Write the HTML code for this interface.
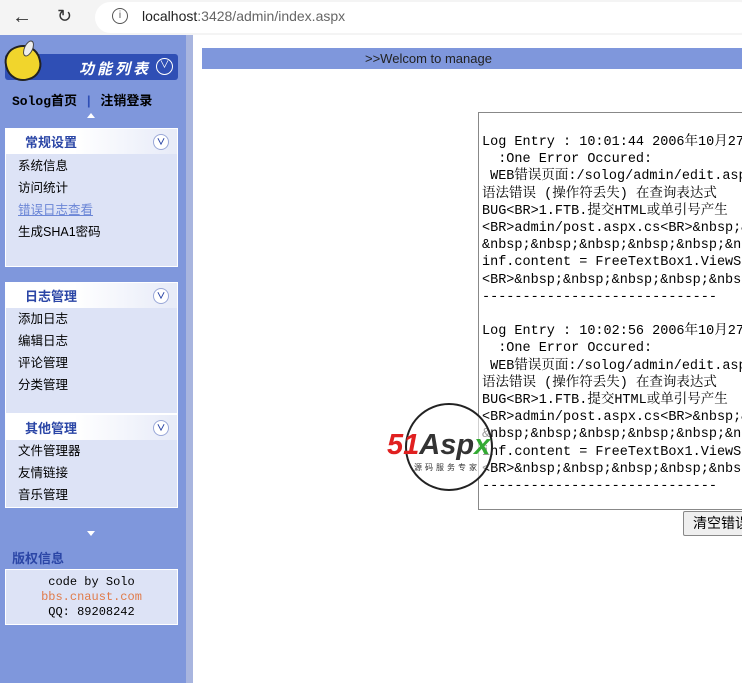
<!DOCTYPE html>
<html><head><meta charset="utf-8"><style>
*{margin:0;padding:0;box-sizing:border-box}
body{width:742px;height:683px;overflow:hidden;background:#fff;font-family:"Liberation Sans","Noto Sans CJK SC",sans-serif;position:relative}
.top{position:absolute;left:0;top:0;width:742px;height:35px;background:#f4f4f4}
.addr{position:absolute;left:95px;top:2px;width:660px;height:31px;border-radius:16px;background:#fff}
.side{position:absolute;left:0;top:35px;width:186px;height:648px;background:#7f97dc}
.stripe{position:absolute;left:186px;top:35px;width:7px;height:648px;background:#a8b5df}
.hdr{position:absolute;left:5px;top:54px;width:173px;height:26px;background:#2f4fb5;border-radius:3px}
.panel{position:absolute;left:5px;width:173px;background:#dde3f6;border:1px solid #fff}
.ph{height:25px;background:linear-gradient(90deg,#fff 0%,#fff 40%,#e7ebf8 100%);font-weight:bold;color:#2b46a6;font-size:13px;line-height:27px;padding-left:19px;position:relative}
.ic{position:absolute;right:8px;top:5px;width:16px;height:16px;border-radius:50%;background:#fff;border:1px solid #9aa8d8;font-size:9px;line-height:14px;text-align:center;color:#2b46a6}
.it{font-size:12.5px;height:22px;line-height:22px;padding-left:12px;color:#000}
.mono{font-family:"Liberation Mono","Noto Sans CJK SC",monospace}
.ta{position:absolute;left:478px;top:112px;width:270px;height:398px;border:1px solid #888;border-right:none;overflow:hidden;padding:21px 0 0 3px;font-family:"Liberation Mono","Noto Serif CJK SC",monospace;font-size:13.5px;line-height:17.2px;white-space:pre;color:#000}
</style></head><body>
<div class="top"><div class="addr"></div>
<div style="position:absolute;left:12px;top:6px;font-size:20px;color:#333">&#8592;</div>
<div style="position:absolute;left:57px;top:6px;font-size:18px;color:#333">&#8635;</div>
<div style="position:absolute;left:112px;top:8px;width:16px;height:16px;border:1.5px solid #555;border-radius:50%;font-size:10px;text-align:center;line-height:13px;color:#555">i</div>
<div style="position:absolute;left:142px;top:8px;font-size:14px;color:#222">localhost<span style="color:#666">:3428/admin/index.aspx</span></div>
</div>
<div class="side"></div><div class="stripe"></div>
<div class="hdr"><div style="position:absolute;left:74px;top:4px;color:#fff;font-weight:bold;font-size:15px;letter-spacing:3px;font-style:italic">功能列表</div>
<div style="position:absolute;right:5px;top:4px;width:17px;height:17px;border:1.5px solid #fff;border-radius:50%;color:#fff;font-size:10px;text-align:center;line-height:14px">&#8744;</div></div>
<div style="position:absolute;left:5px;top:45px;width:36px;height:36px;border-radius:45% 50% 45% 50%;background:#f1d52c;border:2px solid #222;transform:rotate(-15deg)"></div>
<div style="position:absolute;left:24px;top:40px;width:9px;height:17px;border-radius:50%;background:#eee;border:1px solid #444;transform:rotate(25deg)"></div>
<div style="position:absolute;left:12px;top:90px;font-size:13px;font-weight:bold;color:#000" class="mono">Solog首页 <span style="color:#2f4fb5">|</span> 注销登录</div>
<div style="position:absolute;left:87px;top:113px;width:0;height:0;border-left:4px solid transparent;border-right:4px solid transparent;border-bottom:5px solid #fff"></div>
<div class="panel" style="top:128px;height:139px"><div class="ph">常规设置<div class="ic">&#8744;</div></div>
<div class="it" style="margin-top:1px">系统信息</div><div class="it">访问统计</div><div class="it" style="color:#6b86d6;text-decoration:underline">错误日志查看</div><div class="it">生成SHA1密码</div></div>
<div class="panel" style="top:282px;height:132px"><div class="ph">日志管理<div class="ic">&#8744;</div></div>
<div class="it" style="margin-top:0px">添加日志</div><div class="it">编辑日志</div><div class="it">评论管理</div><div class="it">分类管理</div></div>
<div class="panel" style="top:414px;height:94px"><div class="ph">其他管理<div class="ic">&#8744;</div></div>
<div class="it" style="margin-top:0px">文件管理器</div><div class="it">友情链接</div><div class="it">音乐管理</div></div>
<div style="position:absolute;left:87px;top:531px;width:0;height:0;border-left:4px solid transparent;border-right:4px solid transparent;border-top:5px solid #fff"></div>
<div style="position:absolute;left:12px;top:548px;font-size:13px;font-weight:bold;color:#2b46a6">版权信息</div>
<div class="panel mono" style="top:569px;height:56px;text-align:center;font-size:12px;line-height:15px;padding-top:5px">code by Solo<br><span style="color:#e07b4a">bbs.cnaust.com</span><br>QQ: 89208242</div>
<div style="position:absolute;left:202px;top:48px;width:540px;height:21px;background:#7f97dc;font-size:13px;line-height:21px;padding-left:163px;color:#222">&gt;&gt;Welcom to manage</div>
<div class="ta">Log Entry : 10:01:44 2006年10月27日
  :One Error Occured:
 WEB错误页面:/solog/admin/edit.aspx
语法错误 (操作符丢失) 在查询表达式
BUG&lt;BR&gt;1.FTB.提交HTML或单引号产生
&lt;BR&gt;admin/post.aspx.cs&lt;BR&gt;&amp;nbsp;&amp;
&amp;nbsp;&amp;nbsp;&amp;nbsp;&amp;nbsp;&amp;nbsp;&amp;nb
inf.content = FreeTextBox1.ViewSt
&lt;BR&gt;&amp;nbsp;&amp;nbsp;&amp;nbsp;&amp;nbsp;&amp;nbsp
-----------------------------

Log Entry : 10:02:56 2006年10月27日
  :One Error Occured:
 WEB错误页面:/solog/admin/edit.aspx
语法错误 (操作符丢失) 在查询表达式
BUG&lt;BR&gt;1.FTB.提交HTML或单引号产生
&lt;BR&gt;admin/post.aspx.cs&lt;BR&gt;&amp;nbsp;&amp;
&amp;nbsp;&amp;nbsp;&amp;nbsp;&amp;nbsp;&amp;nbsp;&amp;nb
inf.content = FreeTextBox1.ViewSt
&lt;BR&gt;&amp;nbsp;&amp;nbsp;&amp;nbsp;&amp;nbsp;&amp;nbsp
-----------------------------</div>
<div style="position:absolute;left:683px;top:511px;width:70px;height:25px;border:1px solid #888;background:#efefef;font-size:14px;line-height:23px;padding-left:9px;border-radius:2px">清空错误</div>
<div style="position:absolute;left:405px;top:403px;width:88px;height:88px;border:2.5px solid #222;border-radius:50%;background:rgba(255,255,255,.6)"></div>
<div style="position:absolute;left:387px;top:429px;font-size:29px;font-weight:bold;font-style:italic;color:#e02020;letter-spacing:0px">51<span style="color:#333">Asp</span><span style="color:#3a3">x</span></div>
<div style="position:absolute;left:414px;top:462px;font-size:8px;color:#333;letter-spacing:3px">源码服务专家</div>
</body></html>
